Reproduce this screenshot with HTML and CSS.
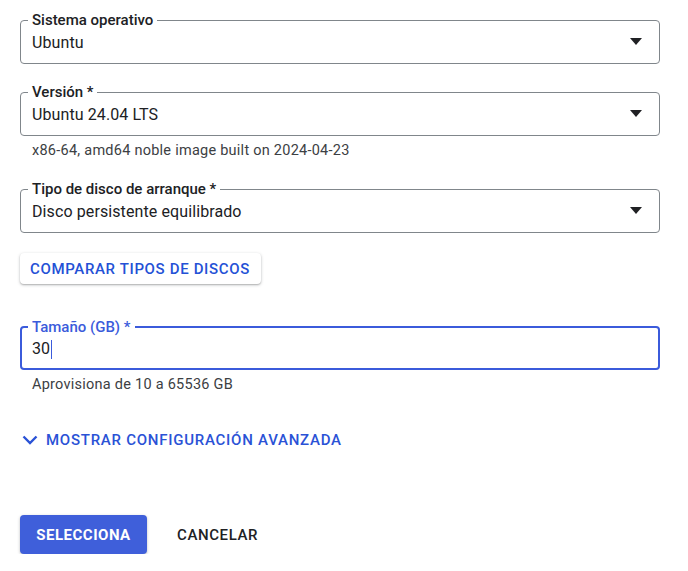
FILE: index.html
```html
<!DOCTYPE html>
<html lang="es">
<head>
<meta charset="utf-8">
<link rel="stylesheet" href="styles.css">
</head>
<body>
<main class="form">
  <fieldset class="field">
    <legend class="field-label">Sistema operativo</legend>
    <div class="field-row">
      <span class="field-value">Ubuntu</span>
      <svg class="arrow" width="12" height="7" viewBox="0 0 12 7"><polygon points="0,0 12,0 6,7" fill="#202124"/></svg>
    </div>
  </fieldset>

  <fieldset class="field f2">
    <legend class="field-label">Versión *</legend>
    <div class="field-row">
      <span class="field-value">Ubuntu 24.04 LTS</span>
      <svg class="arrow" width="12" height="7" viewBox="0 0 12 7"><polygon points="0,0 12,0 6,7" fill="#202124"/></svg>
    </div>
  </fieldset>
  <div class="hint">x86-64, amd64 noble image built on 2024-04-23</div>

  <fieldset class="field f3">
    <legend class="field-label">Tipo de disco de arranque *</legend>
    <div class="field-row">
      <span class="field-value">Disco persistente equilibrado</span>
      <svg class="arrow" width="12" height="7" viewBox="0 0 12 7"><polygon points="0,0 12,0 6,7" fill="#202124"/></svg>
    </div>
  </fieldset>

  <div class="compare-wrap"><button class="btn-raised">COMPARAR TIPOS DE DISCOS</button></div>

  <fieldset class="field focused">
    <legend class="field-label">Tamaño (GB) *</legend>
    <div class="field-row">
      <span class="field-value">30<span class="caret"></span></span>
    </div>
  </fieldset>
  <div class="hint">Aprovisiona de 10 a 65536 GB</div>

  <div class="advanced">
    <svg class="chev" width="16" height="10" viewBox="0 0 16 10"><polyline points="1.5,1.5 8,8 14.5,1.5" fill="none" stroke="#2a52d6" stroke-width="2.4"/></svg>
    <span>MOSTRAR CONFIGURACIÓN AVANZADA</span>
  </div>

  <div class="actions">
    <button class="btn-primary">SELECCIONA</button>
    <button class="btn-text">CANCELAR</button>
  </div>
</main>
</body>
</html>
```

FILE: styles.css
```css
html, body {
  margin: 0;
  padding: 0;
  background: #ffffff;
}
body {
  font-family: Roboto, "Liberation Sans", Arial, sans-serif;
  color: #202124;
}
.form {
  display: flex;
  flex-direction: column;
  align-items: stretch;
  width: 640px;
  padding: 12px 0 0 20px;
}
.field {
  margin: 0;
  padding: 3px 17px 8px 11px;
  border: 1px solid #80868b;
  border-radius: 4px;
  min-width: 0;
}
.field-label {
  font-size: 15px;
  font-weight: 500;
  line-height: 16px;
  padding: 0 4px;
  margin-left: -4px;
  color: #202124;
}
.field-row {
  display: flex;
  align-items: center;
  justify-content: space-between;
  height: 24px;
}
.field-value {
  font-size: 16px;
  line-height: 24px;
  letter-spacing: 0.1px;
  display: flex;
  align-items: center;
}
.arrow {
  flex: none;
  margin-top: -3px;
}
.f2 { margin-top: 20px; }
.f3 { margin-top: 20px; }
.hint {
  font-size: 14.5px;
  line-height: 20px;
  color: #3c4043;
  padding-left: 12px;
  margin-top: 5px;
  letter-spacing: 0.25px;
}
.compare-wrap {
  margin-top: 20px;
  display: flex;
}
.btn-raised {
  font-family: inherit;
  font-size: 15px;
  font-weight: 500;
  color: #2451d6;
  background: #fff;
  border: none;
  border-radius: 4px;
  height: 31px;
  padding: 0 11px 0 10px;
  box-shadow: 0 1px 3px rgba(60, 64, 67, 0.35), 0 1px 1px rgba(60, 64, 67, 0.15);
  letter-spacing: 0.65px;
}
.focused {
  margin-top: 35px;
  border: 2px solid #3b5bdb;
  padding: 2px 16px 7px 10px;
}
.focused .field-label {
  color: #3b5bdb;
}
.caret {
  display: inline-block;
  width: 1px;
  height: 19px;
  background: #3b5bdb;
  margin-left: 1px;
}
.advanced {
  margin-top: 35px;
  display: flex;
  align-items: center;
  gap: 8px;
  padding-left: 2px;
  color: #2a52d6;
  font-size: 15px;
  font-weight: 500;
  letter-spacing: 0.75px;
  line-height: 20px;
}
.chev { flex: none; }
.actions {
  margin-top: 65px;
  display: flex;
  align-items: center;
  gap: 14px;
}
.btn-primary {
  font-family: inherit;
  font-size: 15px;
  font-weight: 700;
  letter-spacing: 0.5px;
  color: #fff;
  background: #3f5fda;
  border: none;
  border-radius: 4px;
  height: 39px;
  width: 127px;
  padding: 0;
  box-shadow: 0 1px 3px rgba(60, 64, 67, 0.35);
}
.btn-text {
  font-family: inherit;
  font-size: 15px;
  font-weight: 500;
  letter-spacing: 0.6px;
  color: #202124;
  background: none;
  border: none;
  padding: 0 16px;
  height: 39px;
}
```
